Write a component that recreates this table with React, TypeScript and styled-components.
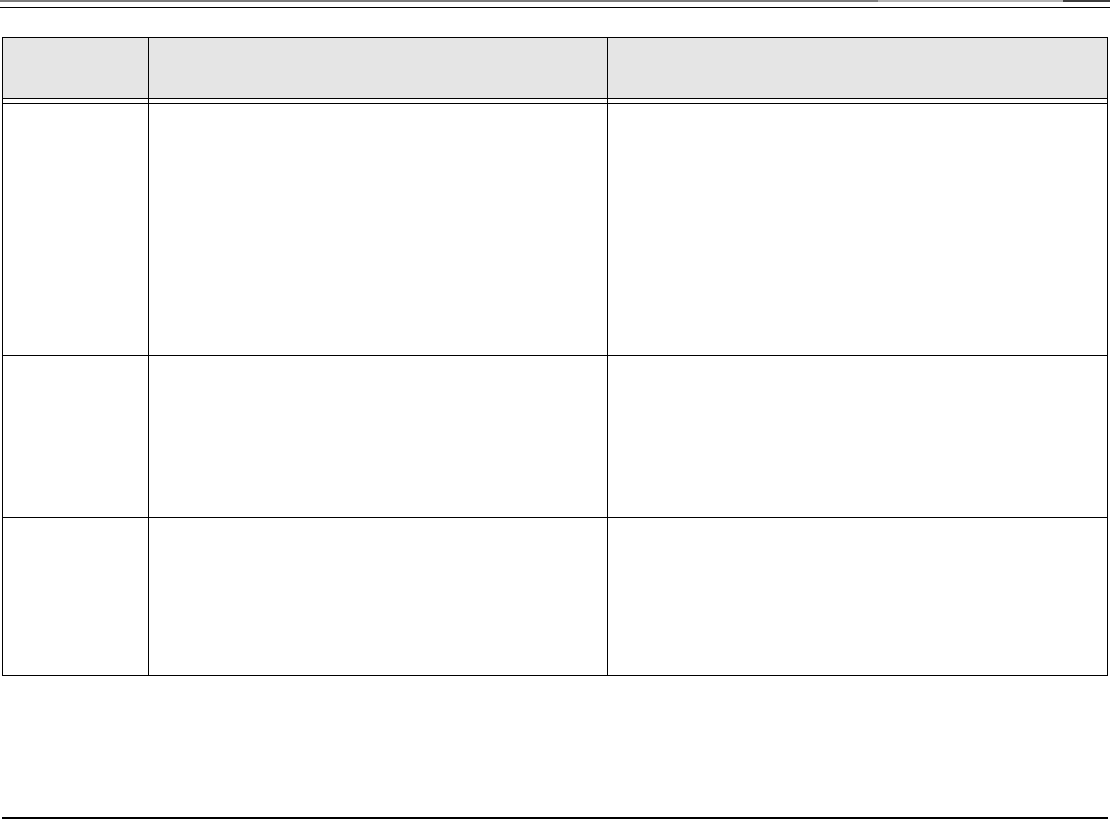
import React from "react";
import styled, { createGlobalStyle } from "styled-components";

const GlobalStyle = createGlobalStyle`
  html, body {
    margin: 0;
    padding: 0;
    background: #fff;
    font-family: "Liberation Sans", Arial, sans-serif;
  }
`;

const Page = styled.div`
  width: 1110px;
  height: 819px;
  overflow: hidden;
  background: #fff;
  display: flex;
  flex-direction: column;
`;

const TopBand = styled.div`
  display: flex;
  height: 2px;
`;

const BandPart = styled.div<{ $w: number; $c: string }>`
  width: ${(p) => p.$w}px;
  background: ${(p) => p.$c};
`;

const TopRule = styled.div`
  margin-top: 5px;
  height: 1px;
  background: #000;
`;

const Sheet = styled.div`
  margin: 29px 0 0 2px;
  width: 1106px;
  display: flex;
  flex-direction: column;
`;

const Row = styled.div<{ $h: number; $top?: boolean; $bottom?: boolean; $shade?: boolean }>`
  box-sizing: border-box;
  height: ${(p) => p.$h}px;
  display: grid;
  grid-template-columns: 146px 459px 500px;
  border-left: 1px solid #000;
  border-top: ${(p) => (p.$top ? "1px solid #000" : "none")};
  border-bottom: ${(p) => (p.$bottom ? "1px solid #000" : "none")};
  background: ${(p) => (p.$shade ? "#e5e5e5" : "#fff")};
`;

const Cell = styled.div`
  box-sizing: border-box;
  border-right: 1px solid #000;
  font-size: 13px;
  color: #000;
`;

const BottomRule = styled.div`
  margin: 141px 0 0 2px;
  width: 1106px;
  height: 2px;
  background: #000;
`;

const rows = [
  { h: 62, top: true, bottom: true, shade: true },
  { h: 4 },
  { h: 252, top: true },
  { h: 162, top: true },
  { h: 159, top: true, bottom: true },
];

export default function App() {
  return (
    <Page>
      <GlobalStyle />
      <TopBand>
        <BandPart $w={878} $c="#7d7d7d" />
        <BandPart $w={185} $c="#b4b4b4" />
        <BandPart $w={47} $c="#3c3c3c" />
      </TopBand>
      <TopRule />
      <Sheet>
        {rows.map((r, i) => (
          <Row key={i} $h={r.h} $top={r.top} $bottom={r.bottom} $shade={r.shade}>
            <Cell />
            <Cell />
            <Cell />
          </Row>
        ))}
      </Sheet>
      <BottomRule />
    </Page>
  );
}
